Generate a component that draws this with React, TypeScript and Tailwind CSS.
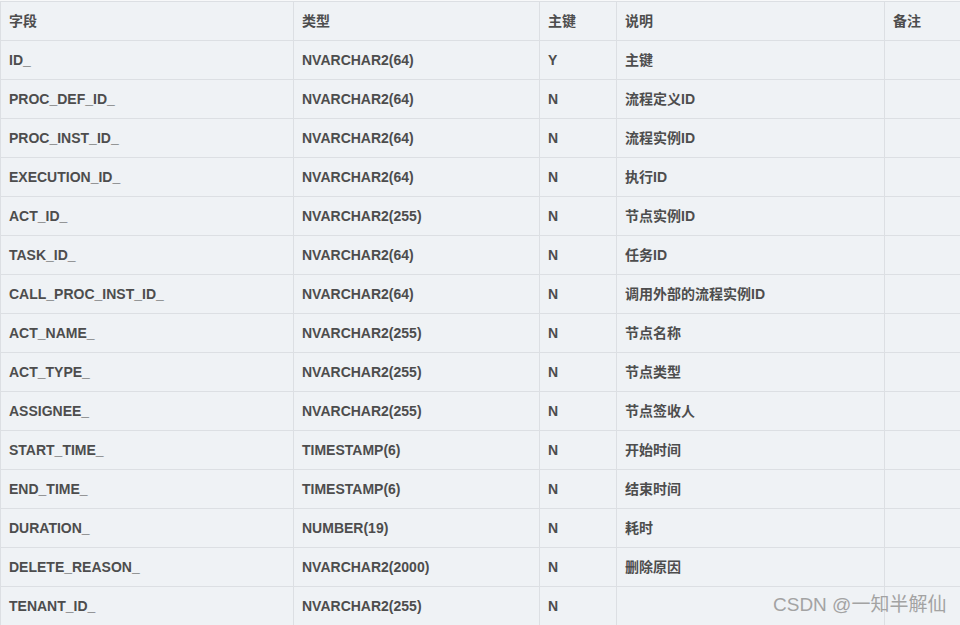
import React from "react";

const rows: [string, string, string, string][] = [
  ["ID_", "NVARCHAR2(64)", "Y", "主键"],
  ["PROC_DEF_ID_", "NVARCHAR2(64)", "N", "流程定义ID"],
  ["PROC_INST_ID_", "NVARCHAR2(64)", "N", "流程实例ID"],
  ["EXECUTION_ID_", "NVARCHAR2(64)", "N", "执行ID"],
  ["ACT_ID_", "NVARCHAR2(255)", "N", "节点实例ID"],
  ["TASK_ID_", "NVARCHAR2(64)", "N", "任务ID"],
  ["CALL_PROC_INST_ID_", "NVARCHAR2(64)", "N", "调用外部的流程实例ID"],
  ["ACT_NAME_", "NVARCHAR2(255)", "N", "节点名称"],
  ["ACT_TYPE_", "NVARCHAR2(255)", "N", "节点类型"],
  ["ASSIGNEE_", "NVARCHAR2(255)", "N", "节点签收人"],
  ["START_TIME_", "TIMESTAMP(6)", "N", "开始时间"],
  ["END_TIME_", "TIMESTAMP(6)", "N", "结束时间"],
  ["DURATION_", "NUMBER(19)", "N", "耗时"],
  ["DELETE_REASON_", "NVARCHAR2(2000)", "N", "删除原因"],
  ["TENANT_ID_", "NVARCHAR2(255)", "N", ""],
];

const cell = "border border-[#dcdfe3] px-[8px] h-[39px] align-middle text-left";

export default function App() {
  return (
    <div
      className="relative w-[960px] h-[625px] overflow-hidden bg-[#f7f8f9] pt-px"
      style={{ fontFamily: '"Liberation Sans", Arial, "Noto Sans CJK SC", sans-serif' }}
    >
      <table className="border-collapse table-fixed w-[1000px] bg-[#eff2f5] text-[14px] font-bold text-[#4d4d4d]">
        <colgroup>
          <col className="w-[293px]" />
          <col className="w-[246px]" />
          <col className="w-[77px]" />
          <col className="w-[268px]" />
          <col className="w-[116px]" />
        </colgroup>
        <thead>
          <tr>
            <th className={cell + " font-bold"}>字段</th>
            <th className={cell + " font-bold"}>类型</th>
            <th className={cell + " font-bold"}>主键</th>
            <th className={cell + " font-bold"}>说明</th>
            <th className={cell + " font-bold"}>备注</th>
          </tr>
        </thead>
        <tbody>
          {rows.map((r, i) => (
            <tr key={i}>
              <td className={cell}>{r[0]}</td>
              <td className={cell}>{r[1]}</td>
              <td className={cell}>{r[2]}</td>
              <td className={cell}>{r[3]}</td>
              <td className={cell}></td>
            </tr>
          ))}
        </tbody>
      </table>
      <div
        className="absolute left-[773px] top-[592px] text-[19px] leading-[26px] text-[#a3a3a3] whitespace-nowrap"
        style={{ fontFamily: '"Liberation Sans", Arial, "Noto Sans CJK SC", sans-serif' }}
      >
        CSDN @一知半解仙
      </div>
    </div>
  );
}
